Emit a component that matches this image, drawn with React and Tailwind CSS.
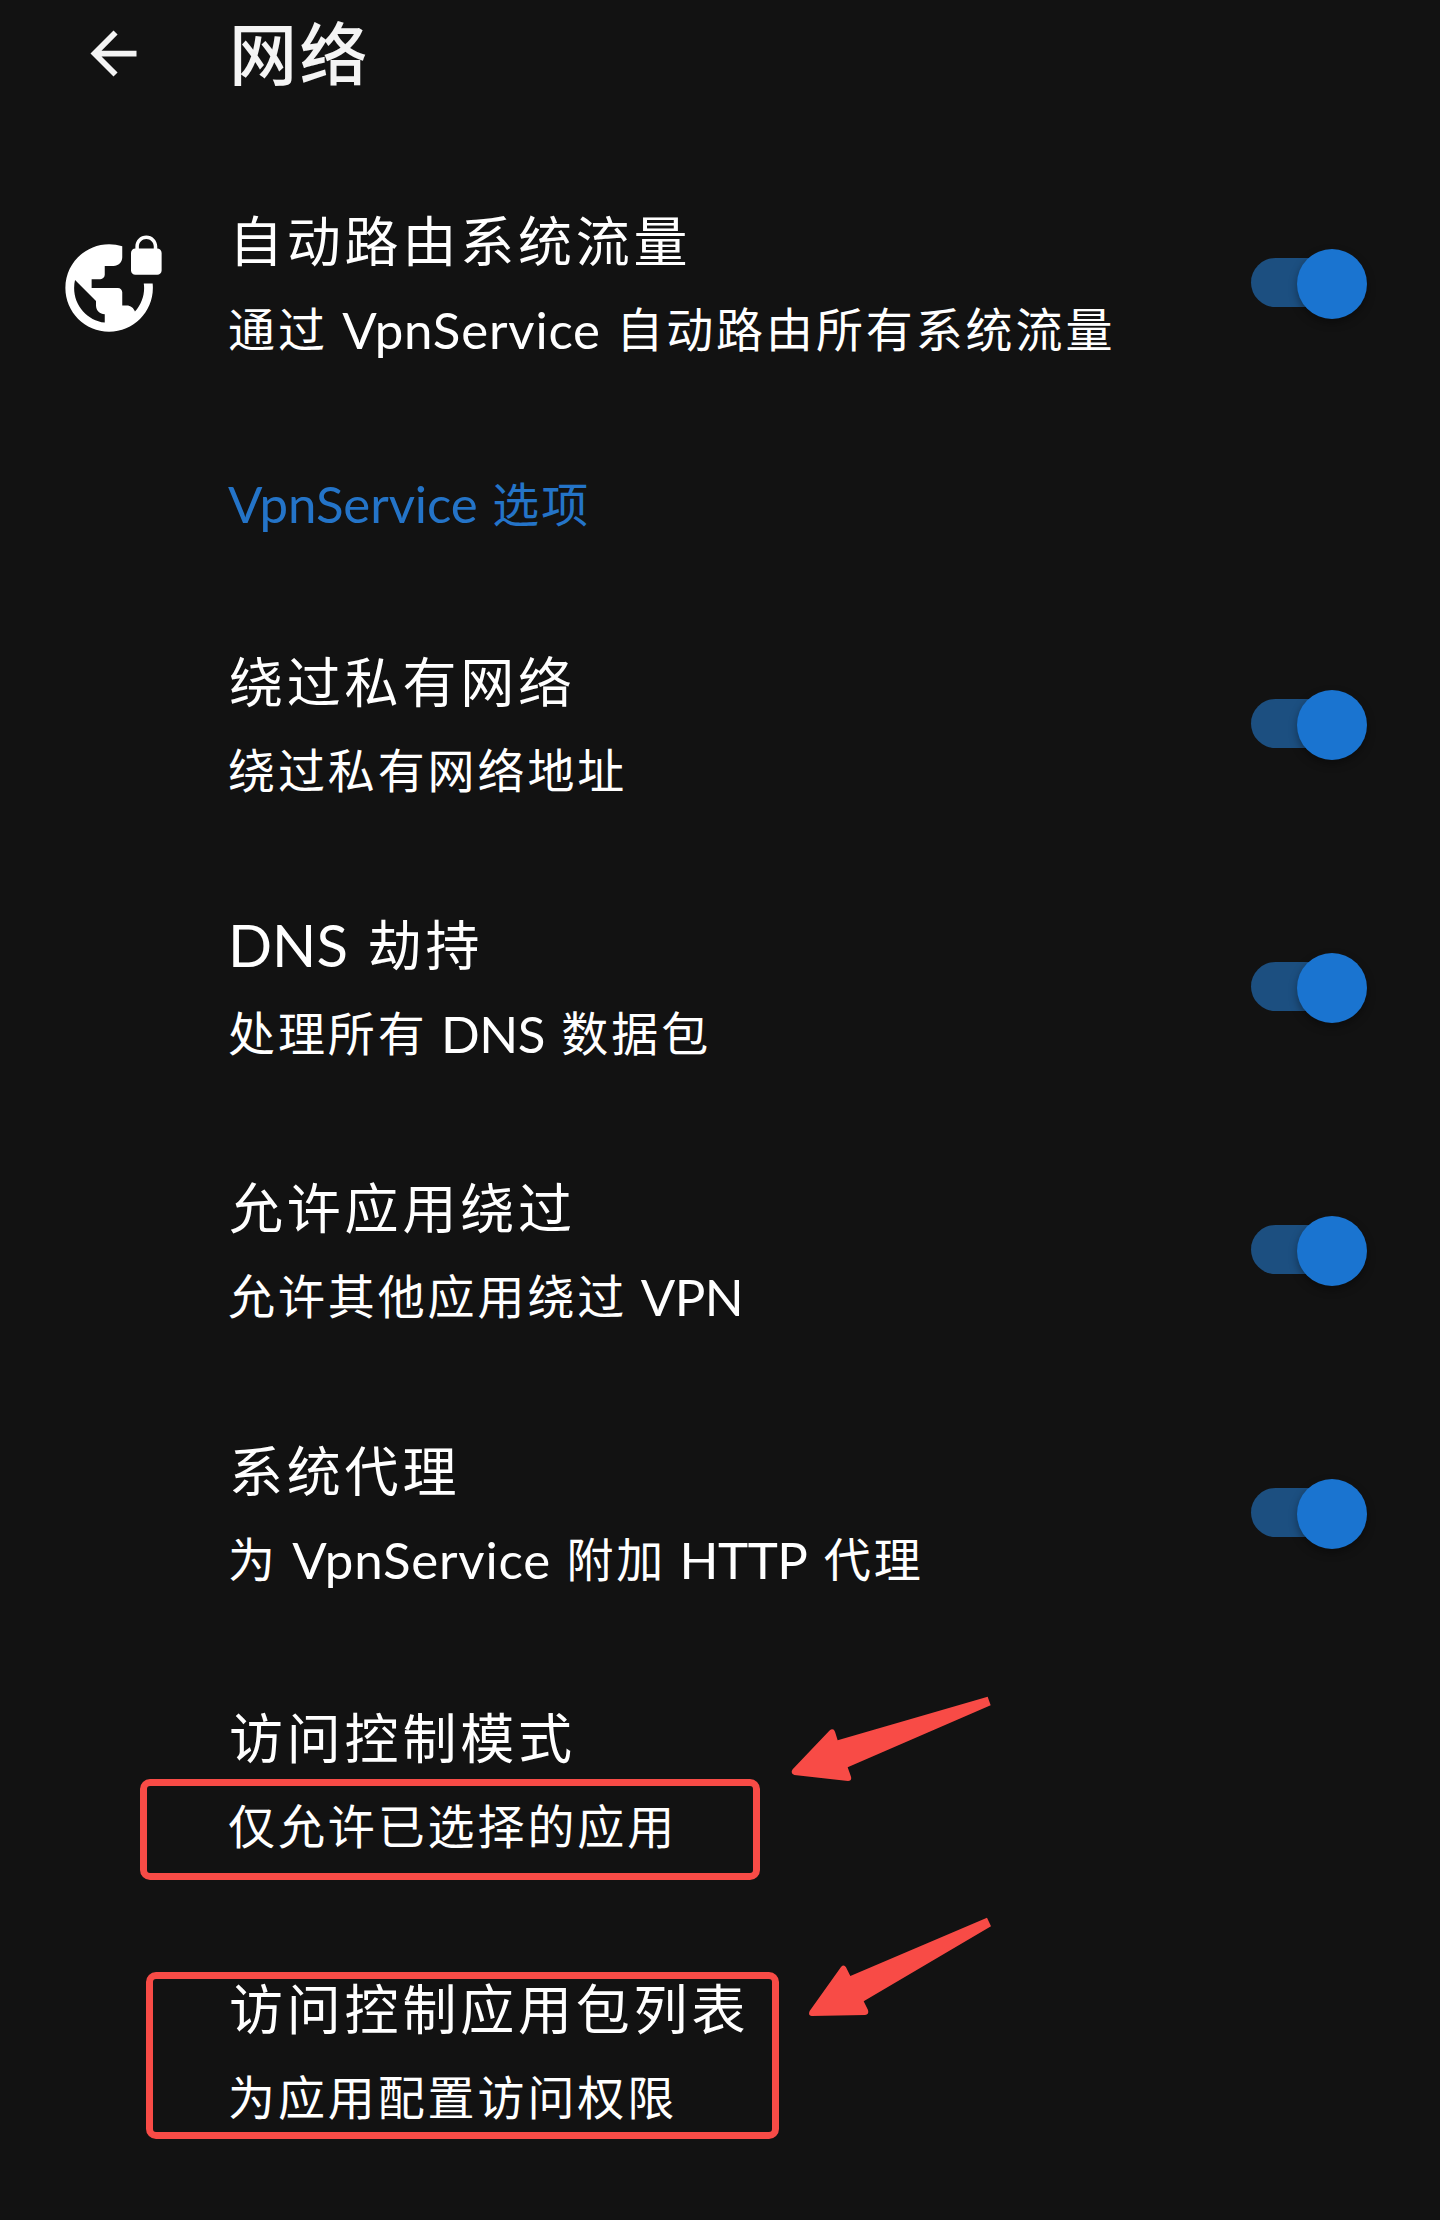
import React from "react";

const CJK = 'font-["Noto_Sans_CJK_SC",sans-serif]';

function Mixed({ text, latin, caps }) {
  return text.split(/([A-Za-z]+)/).map((part, i) =>
    /^[A-Za-z]+$/.test(part) ? (
      <span key={i} className={/^[A-Z]+$/.test(part) ? caps : latin}>{part}</span>
    ) : (
      <React.Fragment key={i}>{part}</React.Fragment>
    )
  );
}

const capsTitle = 'font-["Lato",sans-serif] text-[58px] leading-none tracking-[0px] -ml-[1px] mr-[4px] align-[-1px]';
const latinBody = 'font-["Lato",sans-serif] text-[51px] leading-none tracking-[0.8px] ml-[1px] mr-[2px] align-[-2px]';
const capsBody = 'font-["Lato",sans-serif] text-[51px] leading-none tracking-[-0.5px] mr-[3px] align-[-2px]';
const latinHeading = 'font-["Lato",sans-serif] text-[51px] leading-none tracking-[-0.1px] mr-[2px] align-[-1px]';

function Switch() {
  return (
    <div role="switch" aria-checked="true" className="relative mr-[73px] flex h-[70px] w-[116px] shrink-0 items-center">
      <div className="mb-[2px] h-[49px] w-[100px] rounded-full bg-[#1c4f80]" />
      <div className="absolute right-0 top-0 size-[70px] rounded-full bg-[#1a74d0] shadow-[0_4px_8px_rgba(0,0,0,0.35)]" />
    </div>
  );
}

function VpnLock() {
  return (
    <svg viewBox="0 0 24 24" className="size-[105px]" fill="#fff">
      <path d="M22 4v-.5C22 2.12 20.88 1 19.5 1S17 2.12 17 3.5V4c-.55 0-1 .45-1 1v4c0 .55.45 1 1 1h5c.55 0 1-.45 1-1V5c0-.55-.45-1-1-1zm-.8 0h-3.4v-.5c0-.94.76-1.7 1.7-1.7s1.7.76 1.7 1.7V4zm-2.28 8c.04.33.08.66.08 1 0 2.08-.8 3.97-2.1 5.39-.26-.81-1-1.39-1.9-1.39h-1v-3c0-.55-.45-1-1-1H7v-2h2c.55 0 1-.45 1-1V8h2c1.1 0 2-.9 2-2V3.46c-.95-.3-1.95-.46-3-.46C5.48 3 1 7.48 1 13s4.48 10 10 10 10-4.48 10-10c0-.34-.02-.67-.05-1h-2.03zM10 20.93c-3.95-.49-7-3.85-7-7.93 0-.62.08-1.21.21-1.79L8 16v1c0 1.1.9 2 2 2v1.93z" />
    </svg>
  );
}

function Row({ title, sub, icon, toggle, tall }) {
  return (
    <div className={"flex items-center " + (tall ? "h-[271px]" : "h-[263px]")}>
      <div className="w-[228px] shrink-0 pl-[61px]">{icon}</div>
      <div className="flex-1 whitespace-nowrap pb-[3px] text-white">
        <div className="h-[89px] pl-[1px] text-[54px] leading-[91px] tracking-[3.8px]">
          <Mixed text={title} latin={capsTitle} caps={capsTitle} />
        </div>
        <div className="h-[89px] text-[47px] leading-[89px] tracking-[2.9px]">
          <Mixed text={sub} latin={latinBody} caps={capsBody} />
        </div>
      </div>
      {toggle && <Switch />}
    </div>
  );
}

const options = [
  ["绕过私有网络", "绕过私有网络地址"],
  ["DNS 劫持", "处理所有 DNS 数据包"],
  ["允许应用绕过", "允许其他应用绕过 VPN"],
  ["系统代理", "为 VpnService 附加 HTTP 代理"],
];

export default function App() {
  return (
    <div className={"relative h-[2220px] w-[1440px] overflow-hidden bg-[#121212] " + CJK}>
      <header className="flex h-[152px] items-start">
        <div className="w-[229px] pl-[79px] pt-[19px]">
          <svg viewBox="0 0 24 24" className="size-[69px]" fill="#f4f4f4">
            <path d="M20 11H7.83l5.59-5.59L12 4l-8 8 8 8 1.41-1.41L7.83 13H20v-2z" />
          </svg>
        </div>
        <h1 className="h-[100px] text-[68px] font-medium leading-[102px] tracking-[2.4px] text-[#f4f4f4]">网络</h1>
      </header>

      <Row title="自动路由系统流量" sub="通过 VpnService 自动路由所有系统流量" icon={<VpnLock />} toggle />

      <div className="flex h-[178px] items-center whitespace-nowrap pb-[5px] pl-[228px] text-[47px] leading-[89px] tracking-[2px] text-[#2474c8]">
        <div>
          <Mixed text="VpnService 选项" latin={latinHeading} />
        </div>
      </div>

      {options.map(([title, sub]) => (
        <Row key={title} title={title} sub={sub} toggle />
      ))}
      <Row title="访问控制模式" sub="仅允许已选择的应用" tall />
      <Row title="访问控制应用包列表" sub="为应用配置访问权限" tall />

      <div className="absolute left-[140px] top-[1779px] h-[101px] w-[620px] rounded-[10px] border-[7px] border-[#f84b46]" />
      <div className="absolute left-[146px] top-[1972px] h-[167px] w-[633px] rounded-[10px] border-[7px] border-[#f84b46]" />
      <svg viewBox="0 0 1380 1440" className="absolute left-[560px] top-[1680px] h-[480px] w-[460px]" fill="#f84b46">
        <path d="M1283 50L1292 76L863 262L873 290Q876 303 864 303L703 285Q690 280 698 268L808 152Q820 142 825 155L833 181Z" />
        <path d="M1281 713L1293 739L911 964L924 990Q928 1004 915 1005L755 1008Q743 1006 749 993L843 861Q852 852 858 862L871 888Z" />
      </svg>
    </div>
  );
}
